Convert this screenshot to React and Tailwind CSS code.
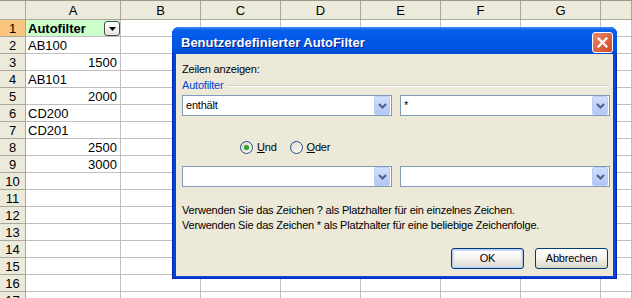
const COLS = ['A', 'B', 'C', 'D', 'E', 'F', 'G', ''];

const DATA = {
  2: { text: 'AB100' },
  3: { text: '1500', num: true },
  4: { text: 'AB101' },
  5: { text: '2000', num: true },
  6: { text: 'CD200' },
  7: { text: 'CD201' },
  8: { text: '2500', num: true },
  9: { text: '3000', num: true },
};

const ROWS = Array.from({ length: 17 }, (_, i) => i + 1);

function FilterArrow() {
  return (
    <div className="absolute right-[0px] top-[1px] w-[16px] h-[15px] rounded-[3px] border border-[#4A4A4A] bg-gradient-to-b from-[#FFFFFF] to-[#E6E4DA] flex items-center justify-center">
      <svg width="7" height="4" viewBox="0 0 7 4">
        <path d="M0 0h7L3.5 4z" fill="#000" />
      </svg>
    </div>
  );
}

function Sheet() {
  return (
    <div className="font-['Liberation_Sans',Arial,sans-serif] text-[13px] text-black bg-white">
      <div className="grid grid-cols-[26px_95px_80px_80px_80px_80px_80px_80px_1fr] h-[20px] border-t border-[#9D9A8B]">
        <div className="border-r border-b border-[#ACA899] bg-[#EBEADB]" />
        {COLS.map((c, i) => (
          <div
            key={i}
            className="border-r border-b border-[#ACA899] bg-[#EBEADB] flex items-center justify-center leading-none"
          >
            {c}
          </div>
        ))}
      </div>
      {ROWS.map((n) => {
        const d = DATA[n];
        return (
          <div
            key={n}
            className="grid grid-cols-[26px_95px_80px_80px_80px_80px_80px_80px_1fr] h-[17px]"
          >
            <div
              className={
                'border-r border-b border-[#ACA899] flex items-center justify-center leading-none ' +
                (n === 1 ? 'bg-[#F8C47E]' : 'bg-[#EBEADB]')
              }
            >
              {n}
            </div>
            {n === 1 ? (
              <div className="relative border-r border-b border-[#C0C0C0] bg-[#CCFFCC] flex items-center pl-[2px] font-bold leading-none">
                Autofilter
                <FilterArrow />
              </div>
            ) : (
              <div
                className={
                  'border-r border-b border-[#C0C0C0] flex items-center leading-none ' +
                  (d && d.num ? 'justify-end pr-[3px]' : 'pl-[2px]')
                }
              >
                {d ? d.text : ''}
              </div>
            )}
            {COLS.slice(1).map((c, i) => (
              <div key={i} className="border-r border-b border-[#C0C0C0]" />
            ))}
          </div>
        );
      })}
    </div>
  );
}

function Combo({ value }) {
  return (
    <div className="flex-1 h-[21px] border border-[#7F9DB9] bg-white flex items-center">
      <div className="flex-1 pl-[3px] leading-none">{value}</div>
      <div className="w-[16px] h-[19px] mr-[1px] rounded-[2px] border border-[#B9CDF6] bg-gradient-to-b from-[#D2DFFD] to-[#B1C6F5] flex items-center justify-center">
        <svg width="9" height="6" viewBox="0 0 9 6">
          <path d="M1 1l3.5 3.5L8 1" stroke="#4D6185" strokeWidth="2" fill="none" />
        </svg>
      </div>
    </div>
  );
}

function Radio({ checked, label, accel }) {
  return (
    <div className="flex items-center gap-[4px]">
      <div className="w-[13px] h-[13px] rounded-full border border-[#1C5180] bg-gradient-to-br from-[#DCD9CF] to-[#FFFFFF] flex items-center justify-center">
        {checked && <div className="w-[5px] h-[5px] rounded-full bg-[#2FA72F] shadow-[0_0_1px_#5CD65C]" />}
      </div>
      <span className="leading-none">
        <span className="underline underline-offset-1">{accel}</span>
        {label}
      </span>
    </div>
  );
}

function XpButton({ children, def }) {
  return (
    <div
      className={
        'w-[73px] h-[21px] rounded-[3px] border border-[#003C74] flex items-center justify-center leading-none bg-gradient-to-b from-[#FFFFFF] via-[#F4F3EE] to-[#D8D4C8] ' +
        (def ? 'shadow-[inset_0_0_0_1px_#B8CCF4,inset_0_0_0_2px_#CFDDF8]' : '')
      }
    >
      {children}
    </div>
  );
}

function Dialog() {
  return (
    <div className="absolute left-[172px] top-[27px] w-[445px] h-[252px] flex flex-col rounded-t-[7px] bg-[#0843D8] shadow-[inset_0_0_0_1px_#0026B8] font-['Liberation_Sans',Arial,sans-serif] text-[11px] text-black">
      <div className="h-[27px] shrink-0 flex items-start justify-between pl-[9px] pr-[4px] pt-[5px] rounded-t-[7px] bg-[linear-gradient(to_bottom,#3C8CF7_0%,#0A5DEC_12%,#0058E6_45%,#0054E1_80%,#0049D2_100%)]">
        <div className="text-white font-bold text-[13px] leading-[21px] [text-shadow:1px_1px_0_#0A1E8C]">
          Benutzerdefinierter AutoFilter
        </div>
        <div className="w-[21px] h-[21px] rounded-[3px] border border-white bg-gradient-to-br from-[#E9866A] to-[#D0431C] flex items-center justify-center">
          <svg width="11" height="11" viewBox="0 0 11 11">
            <path d="M1.5 1.5l8 8M9.5 1.5l-8 8" stroke="#fff" strokeWidth="2.2" strokeLinecap="square" />
          </svg>
        </div>
      </div>
      <div className="flex-1 mx-[4px] mb-[3px] bg-[#ECE9D8] pl-[6px] pr-[3px] flex flex-col tracking-[-0.2px]">
        <div className="mt-[9px] h-[13px] leading-[13px]">Zeilen anzeigen:</div>
        <div className="mt-[3px] h-[13px] flex items-center mr-[1px]">
          <span className="text-[#0046D5] leading-[13px]">Autofilter</span>
          <div className="flex-1 ml-[5px] h-[2px] border-t border-[#D0D0BF] border-b border-b-white" />
        </div>
        <div className="mt-[3px] flex gap-[8px]">
          <Combo value="enthält" />
          <Combo value="*" />
        </div>
        <div className="mt-[25px] h-[13px] flex items-center gap-[13px] pl-[58px]">
          <Radio checked accel="U" label="nd" />
          <Radio accel="O" label="der" />
        </div>
        <div className="mt-[12px] flex gap-[8px]">
          <Combo value="" />
          <Combo value="" />
        </div>
        <div className="mt-[16px] leading-[15px]">
          Verwenden Sie das Zeichen ? als Platzhalter für ein einzelnes Zeichen.
        </div>
        <div className="leading-[15px]">
          Verwenden Sie das Zeichen * als Platzhalter für eine beliebige Zeichenfolge.
        </div>
        <div className="mt-[15px] flex justify-end gap-[11px] mr-[2px]">
          <XpButton def>OK</XpButton>
          <XpButton>Abbrechen</XpButton>
        </div>
      </div>
    </div>
  );
}

export default function App() {
  return (
    <div className="relative w-[632px] h-[298px] overflow-hidden bg-white">
      <Sheet />
      <Dialog />
    </div>
  );
}
